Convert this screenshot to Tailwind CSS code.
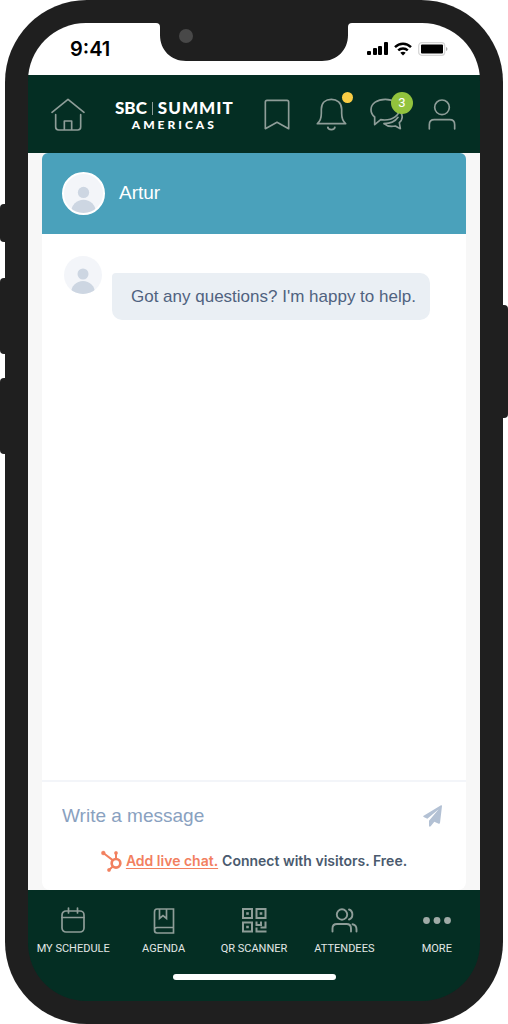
<!DOCTYPE html>
<html lang="en">
<head>
    <meta charset="UTF-8">
    <meta name="viewport" content="width=device-width, initial-scale=1.0">
    <title>SBC Summit Americas - Chat</title>
    <script src="https://cdn.jsdelivr.net/npm/@tailwindcss/browser@4"></script>
</head>
<body class="bg-white font-['Liberation_Sans',Arial,sans-serif]">
    <!-- Phone body -->
    <div class="relative mx-[5px] flex min-h-screen flex-col rounded-[82px] bg-[#1f1f1f] p-[23px]">
        <!-- Side keys -->
        <span class="absolute -left-[5px] top-[204px] h-[38px] w-2 rounded-l-sm bg-[#1f1f1f]"></span>
        <span class="absolute -left-[5px] top-[278px] h-[76px] w-2 rounded-l-sm bg-[#1f1f1f]"></span>
        <span class="absolute -left-[5px] top-[378px] h-[76px] w-2 rounded-l-sm bg-[#1f1f1f]"></span>
        <span class="absolute -right-[5px] top-[305px] h-[113px] w-2 rounded-r-sm bg-[#1f1f1f]"></span>

        <div class="flex flex-1 flex-col overflow-hidden rounded-[58px]">
            <!-- Status bar -->
            <div class="relative flex h-[52px] items-center justify-between bg-white pl-[42px] pr-8">
                <span class="font-['Inter',sans-serif] text-xl font-semibold text-black">9:41</span>
                <svg class="absolute left-1/2 top-0 h-[38px] w-[196px] -translate-x-1/2" viewBox="0 0 196 38" fill="#1f1f1f">
                    <path d="M0 0q4 0 4 4v8c0 15 11 26 26 26h136c15 0 26-11 26-26V4q0-4 4-4z"/>
                    <circle cx="30" cy="13" r="7" fill="#484848"/>
                </svg>
                <div class="flex items-center gap-[6px]">
                    <svg class="h-[14px] w-[21px]" viewBox="0 0 21 14" fill="#000">
                        <rect x="0" y="9" width="4" height="4" rx="1"/>
                        <rect x="6" y="6" width="4" height="7" rx="1"/>
                        <rect x="11" y="4" width="4" height="9" rx="1"/>
                        <rect x="17" y="0" width="4" height="13" rx="1"/>
                    </svg>
                    <svg class="h-[14px] w-[18px]" viewBox="0 0 18 14" fill="none" stroke="#000" stroke-width="2.4">
                        <path d="M1 5.200C5.500.600 12.500.600 17 5.200M4.200 8.400c2.700-2.600 6.900-2.600 9.600 0"/>
                        <path d="M9 13.500l-2.700-2.700c1.500-1.400 3.900-1.400 5.400 0z" fill="#000" stroke="none"/>
                    </svg>
                    <svg class="h-[14px] w-[30px]" viewBox="0 0 30 14">
                        <rect x=".7" y=".7" width="26" height="12.600" rx="3" fill="#fff" stroke="#d4d4d4" stroke-width="1.200"/>
                        <rect x="3" y="2.500" width="22" height="9" rx="1" fill="#000"/>
                        <path d="M28 5v4q1.500-.5 1.500-2T28 5z" fill="#b0b0b0"/>
                    </svg>
                </div>
            </div>

            <!-- App header -->
            <header class="flex h-[78px] items-center justify-between bg-[#042e23] pl-3 pr-[11px] text-[#8e9d98]">
                <div class="flex items-center gap-5">
                    <a href="#" aria-label="Home" class="flex w-[55px] justify-center">
                        <svg class="h-[33px] w-[34px]" viewBox="0 0 102 99" fill="none" stroke="currentColor" stroke-width="5" stroke-linecap="round" stroke-linejoin="round">
                            <path d="M3 43L51 4l48 39M14 50v37q0 9 9 9h57q9 0 9-9V50M40 95V69h22v26"/>
                        </svg>
                    </a>
                    <div class="flex flex-col items-center pt-1 font-['Lato',sans-serif] font-black text-white">
                        <div class="flex items-center text-[17px] leading-[18px]">
                            <span>SBC</span>
                            <span class="mx-[5px] h-[13px] w-px bg-[#8e9d98]"></span>
                            <span class="tracking-[1px]">SUMMIT</span>
                        </div>
                        <span class="text-xs leading-[16px] tracking-[3px]">AMERICAS</span>
                    </div>
                </div>
                <div class="flex items-center">
                    <button type="button" aria-label="Bookmarks" class="flex w-[55px] justify-center">
                        <svg class="h-[31px] w-[26px]" viewBox="0 0 78 93" fill="none" stroke="currentColor" stroke-width="5" stroke-linejoin="round">
                            <path d="M4 89V9q0-5 5-5h60q5 0 5 5v80L39 70z"/>
                        </svg>
                    </button>
                    <button type="button" aria-label="Notifications" class="relative flex w-[55px] justify-center">
                        <svg class="h-[33px] w-[31px]" viewBox="0 0 93 99" fill="none" stroke="currentColor" stroke-width="5" stroke-linejoin="round">
                            <path d="M4 77c9-7 12-17 12-31V34C16 14 29 4 46 4s31 10 31 30v12c0 14 3 24 12 31zM35 86c1 12 21 12 22 0"/>
                        </svg>
                        <span class="absolute -top-[6px] right-[6px] size-[11px] rounded-full bg-[#f9cd45]"></span>
                    </button>
                    <button type="button" aria-label="Messages, 3 unread" class="relative flex w-[55px] justify-center">
                        <svg class="h-[32px] w-[33px]" viewBox="0 0 99 96" fill="none" stroke="currentColor" stroke-width="5" stroke-linejoin="round">
                            <path d="M14 80V57C6 50 3 43 3 35 3 16 22 4 46 4s42 12 42 28c0 20-20 34-44 34q-6 0-12-1z"/>
                            <path d="M42 77c9 8 21 10 34 7l15 8-3-18c9-8 10-19 6-28M42 77c18 0 34-7 42-19" stroke-linecap="round"/>
                        </svg>
                        <span class="absolute -top-[6px] right-[1px] flex size-[22px] items-center justify-center rounded-full bg-[#92c33d] font-['Roboto',sans-serif] text-[13px] text-white">3</span>
                    </button>
                    <button type="button" aria-label="Profile" class="flex w-[55px] justify-center">
                        <svg class="h-[31px] w-[28px]" viewBox="0 0 84 93" fill="none" stroke="currentColor" stroke-width="5" stroke-linecap="round">
                            <circle cx="42" cy="25" r="22"/>
                            <path d="M4 90V77q0-15 15-15h46q15 0 15 15v13"/>
                        </svg>
                    </button>
                </div>
            </header>

            <!-- Chat widget -->
            <main class="flex flex-1 flex-col bg-[#f7f7f7] px-[14px]">
                <section class="flex flex-1 flex-col rounded-lg bg-white">
                    <div class="flex h-[81px] items-center gap-[14px] rounded-t-md bg-[#4aa1bb] px-5">
                        <span class="overflow-hidden rounded-full border-2 border-white bg-[#f3f5f9]">
                            <svg class="size-[39px]" viewBox="0 0 38 38" fill="#cdd6e2">
                                <circle cx="19" cy="18" r="5.500"/>
                                <circle cx="19" cy="37" r="12"/>
                            </svg>
                        </span>
                        <h1 class="text-[19px] text-white">Artur</h1>
                    </div>

                    <div class="flex flex-1 items-start gap-[10px] px-[22px] pt-[22px]">
                        <span class="shrink-0 overflow-hidden rounded-full bg-[#f3f5f9]">
                            <svg class="size-[38px]" viewBox="0 0 38 38" fill="#cdd6e2">
                                <circle cx="19" cy="18" r="5.500"/>
                                <circle cx="19" cy="37" r="12"/>
                            </svg>
                        </span>
                        <p class="mt-[17px] rounded-[10px] rounded-tl-sm bg-[#eaeff4] py-3 pl-[19px] pr-[14px] text-[17px] leading-[23px] text-[#50627f]">Got any questions? I'm happy to help.</p>
                    </div>

                    <form class="flex items-center gap-3 border-t-2 border-[#f3f5f9] px-5 pt-[14px]">
                        <input type="text" aria-label="Write a message" placeholder="Write a message" class="h-10 min-w-0 flex-1 text-[19px] text-[#50627f] outline-none placeholder:text-[#89a1c0]">
                        <button type="submit" aria-label="Send" class="mr-1">
                            <svg class="h-[22px] w-[19px]" viewBox="0 0 57 66" fill="#b3c1d4">
                                <path d="M54 1q3-1 3 2l-6 51q-1 3-4 2l-13-6-11 14q-4 3-5-2V47L47 13 13 41 2 36q-3-2 0-4z"/>
                            </svg>
                        </button>
                    </form>
                    <div class="flex items-center justify-center px-5 pb-[18px] pt-[14px] font-['Inter',sans-serif] text-sm leading-[22px] text-[#4a5a6e]">
                        <svg class="mr-1 h-[22px] w-[21px] shrink-0" viewBox="0 0 63 66" fill="#f2805f" stroke="#f2805f">
                            <path d="M7 9l29 22M45 9v19M24 60l12-11" fill="none" stroke-width="6"/>
                            <circle cx="45" cy="40" r="13" fill="none" stroke-width="8"/>
                            <circle cx="7" cy="9" r="6"/>
                            <circle cx="45" cy="9" r="5"/>
                            <circle cx="24" cy="60" r="5"/>
                        </svg>
                        <p><a href="#" class="font-semibold text-[#f2805f] underline underline-offset-2">Add live chat.</a> <span class="font-semibold">Connect with visitors. Free.</span></p>
                    </div>
                </section>
            </main>

            <!-- Bottom navigation -->
            <footer class="bg-[#042e23] pb-[21px] pt-4">
                <nav class="grid grid-cols-5 font-['Roboto',sans-serif] text-[11px] leading-[16px] text-[#e3e8e6]">
                    <a href="#" class="flex flex-col items-center gap-[7px] whitespace-nowrap">
                        <svg class="size-7 text-[#8e9d98]" viewBox="0 0 28 28" fill="none" stroke="currentColor" stroke-width="1.700" stroke-linecap="round">
                            <rect x="3" y="5" width="22" height="21" rx="4"/>
                            <path d="M3 11.500h22M9.500 2v5M18.500 2v5"/>
                        </svg>
                        MY SCHEDULE
                    </a>
                    <a href="#" class="flex flex-col items-center gap-[7px] whitespace-nowrap">
                        <svg class="size-7 text-[#8e9d98]" viewBox="0 0 28 28" fill="none" stroke="currentColor" stroke-width="1.700">
                            <path d="M23.500 21.500V3H7Q4.500 3 4.500 6v18q0 3 2.500 3h16.500v-5.500H7q-2.500 0-2.500 2.500"/>
                            <path d="M9.500 3v9.500l3.500-3 3.500 3V3"/>
                        </svg>
                        AGENDA
                    </a>
                    <a href="#" class="flex flex-col items-center gap-[7px] whitespace-nowrap">
                        <svg class="size-7 text-[#8e9d98]" viewBox="0 0 28 28" fill="none" stroke="currentColor" stroke-width="2">
                            <path d="M3 3h9v9H3zM16.500 3h9v9h-9zM3 16.500h9v9H3z"/>
                            <path d="M6.200 7.500h2.600M19.700 7.500h2.600M6.200 21h2.600" stroke-width="2.600"/>
                            <path d="M16.500 15.500v3.500h4.500v-3.500M25.500 15.500v6h-5M16.500 21.500v4h10"/>
                        </svg>
                        QR SCANNER
                    </a>
                    <a href="#" class="flex flex-col items-center gap-[7px] whitespace-nowrap">
                        <svg class="size-7 text-[#8e9d98]" viewBox="0 0 28 28" fill="none" stroke="currentColor" stroke-width="1.900" stroke-linecap="round">
                            <circle cx="12" cy="8.500" r="5.200"/>
                            <path d="M2.500 25.500v-3q0-4.500 4.500-4.500h9.500q4.500 0 4.500 4.500v3M19 3.500c4.500 1.500 4.500 8.500 0 10M22.500 18.200q4 .8 4 5v2.300"/>
                        </svg>
                        ATTENDEES
                    </a>
                    <a href="#" class="flex flex-col items-center gap-[7px] whitespace-nowrap pl-1">
                        <svg class="size-7 text-[#a0aba7]" viewBox="0 0 28 28" fill="currentColor">
                            <circle cx="3.500" cy="14.500" r="3.400"/>
                            <circle cx="14" cy="14.500" r="3.400"/>
                            <circle cx="24.500" cy="14.500" r="3.400"/>
                        </svg>
                        MORE
                    </a>
                </nav>
                <div class="mx-auto mt-[17px] h-[6px] w-[163px] rounded-full bg-white"></div>
            </footer>
        </div>
    </div>
</body>
</html>
